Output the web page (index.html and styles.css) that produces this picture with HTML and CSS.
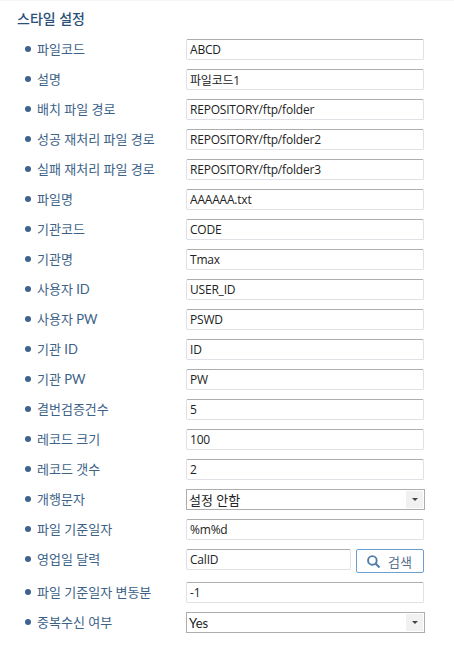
FILE: index.html
```html
<!DOCTYPE html>
<html lang="ko">
<head>
    <meta charset="UTF-8">
    <meta name="viewport" content="width=device-width, initial-scale=1.0">
    <title>스타일 설정</title>
    <link rel="stylesheet" href="styles.css">
</head>
<body>
    <div class="panel">
        <h2 class="title">스타일 설정</h2>
        <div class="form">
            <div class="row"><label class="label">파일코드</label><input class="field" value="ABCD"></div>
            <div class="row"><label class="label">설명</label><input class="field" value="파일코드1"></div>
            <div class="row"><label class="label">배치 파일 경로</label><input class="field" value="REPOSITORY/ftp/folder"></div>
            <div class="row"><label class="label">성공 재처리 파일 경로</label><input class="field" value="REPOSITORY/ftp/folder2"></div>
            <div class="row"><label class="label">실패 재처리 파일 경로</label><input class="field" value="REPOSITORY/ftp/folder3"></div>
            <div class="row"><label class="label">파일명</label><input class="field" value="AAAAAA.txt"></div>
            <div class="row"><label class="label">기관코드</label><input class="field" value="CODE"></div>
            <div class="row"><label class="label">기관명</label><input class="field" value="Tmax"></div>
            <div class="row"><label class="label">사용자 ID</label><input class="field" value="USER_ID"></div>
            <div class="row"><label class="label">사용자 PW</label><input class="field" value="PSWD"></div>
            <div class="row"><label class="label">기관 ID</label><input class="field" value="ID"></div>
            <div class="row"><label class="label">기관 PW</label><input class="field" value="PW"></div>
            <div class="row"><label class="label">결번검증건수</label><input class="field" value="5"></div>
            <div class="row"><label class="label">레코드 크기</label><input class="field" value="100"></div>
            <div class="row"><label class="label">레코드 갯수</label><input class="field" value="2"></div>
            <div class="row">
                <label class="label">개행문자</label>
                <div class="combo"><span>설정 안함</span><i class="combo-btn"><b class="caret"></b></i></div>
            </div>
            <div class="row"><label class="label">파일 기준일자</label><input class="field" value="%m%d"></div>
            <div class="row row-tall">
                <label class="label">영업일 달력</label>
                <input class="field field-short" value="CalID">
                <button class="search-btn">
                    <svg width="15" height="15" viewBox="0 0 16 16"><circle cx="6.8" cy="6.8" r="4.6" fill="none" stroke="#4f7ba6" stroke-width="2"/><path d="M10.2 10.2L14.4 14.4" stroke="#4f7ba6" stroke-width="2.2"/></svg>
                    <span>검색</span>
                </button>
            </div>
            <div class="row"><label class="label">파일 기준일자 변동분</label><input class="field" value="-1"></div>
            <div class="row">
                <label class="label">중복수신 여부</label>
                <div class="combo"><span>Yes</span><i class="combo-btn"><b class="caret"></b></i></div>
            </div>
        </div>
    </div>
</body>
</html>
```

FILE: styles.css
```css
* {
    box-sizing: border-box;
}
body {
    margin: 0;
    background-color: #ffffff;
    font-family: Lato, "Noto Sans CJK KR", sans-serif;
    font-size: 13px;
    color: #222222;
}
.panel {
    padding: 0 0 0 17px;
    border-top: 1px solid #f6f6f6;
}
.title {
    margin: 0;
    height: 34px;
    padding-top: 8px;
    font-size: 14px;
    line-height: 20px;
    font-weight: 500;
    color: #2b5078;
}
.row {
    display: flex;
    align-items: flex-start;
    height: 30px;
    padding-top: 4px;
}
.row-tall {
    height: 33px;
}
.label {
    position: relative;
    width: 169px;
    height: 21px;
    padding-left: 20px;
    line-height: 20px;
    color: #3c6288;
}
.label::before {
    content: "";
    position: absolute;
    left: 8px;
    top: 7px;
    width: 6px;
    height: 6px;
    border-radius: 50%;
    background-color: #3e6390;
}
.field {
    width: 238px;
    height: 21px;
    padding: 0 3px;
    border: 1px solid #e0e0e6;
    border-top-color: #adadad;
    border-radius: 2px;
    outline: none;
    font-family: "Open Sans", "Noto Sans CJK KR", sans-serif;
    font-size: 12px;
    letter-spacing: -0.2px;
    color: #222222;
    background-color: #ffffff;
}
.field-short {
    width: 165px;
}
.combo {
    display: flex;
    align-items: center;
    justify-content: space-between;
    width: 239px;
    height: 21px;
    padding: 1px 1px 1px 2px;
    border: 1px solid #adadad;
    color: #222222;
}
.combo-btn {
    display: flex;
    align-items: center;
    justify-content: center;
    width: 17px;
    height: 17px;
    background-color: #f1f1f1;
}
.caret {
    width: 0;
    height: 0;
    border-left: 3px solid transparent;
    border-right: 3px solid transparent;
    border-top: 3px solid #444444;
}
.search-btn {
    display: flex;
    align-items: center;
    gap: 7px;
    width: 68px;
    height: 24px;
    margin-left: 5px;
    padding: 0 0 0 9px;
    border: 1px solid #6b9fd4;
    border-radius: 2px;
    background-color: #ffffff;
    font: inherit;
    color: #55708c;
}
```
